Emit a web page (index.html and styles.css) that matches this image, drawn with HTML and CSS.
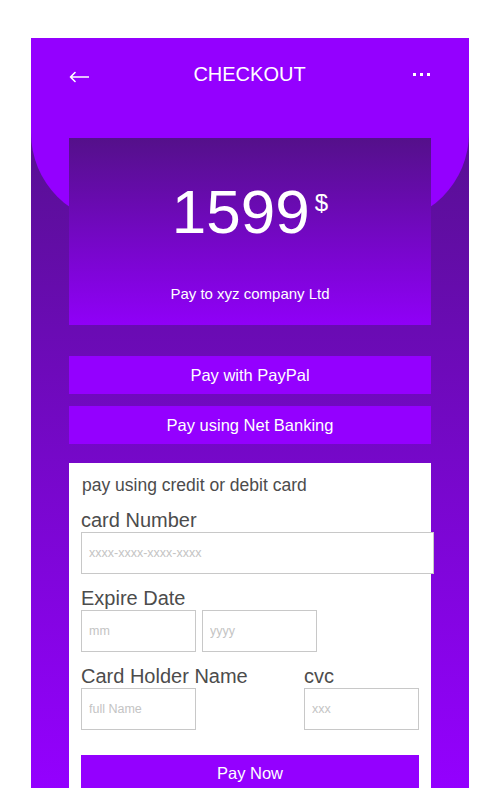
FILE: index.html
```html
<!DOCTYPE html>
<html lang="en">
<head>
<meta charset="utf-8">
<title>Checkout</title>
<link rel="stylesheet" href="styles.css">
</head>
<body>
<div class="phone">
  <header class="top">
    <nav class="nav">
      <svg class="back" width="20" height="12" viewBox="0 0 20 12" aria-label="back">
        <path d="M1.5 6 H19.5 M6 1.5 L1.5 6 L6 10.5" fill="none" stroke="#fff" stroke-width="1.6" stroke-linecap="round" stroke-linejoin="round"/>
      </svg>
      <h1 class="title">CHECKOUT</h1>
      <span class="more"><i></i><i></i><i></i></span>
    </nav>
  </header>

  <section class="amount">
    <div class="price">1599<span class="cur">$</span></div>
    <p class="payee">Pay to xyz company Ltd</p>
  </section>

  <div class="methods">
    <button class="method" type="button">Pay with PayPal</button>
    <button class="method" type="button">Pay using Net Banking</button>
  </div>

  <form class="cardform">
    <p class="lead">pay using credit or debit card</p>
    <div class="group first">
      <label class="lbl" for="num">card Number</label>
      <input class="field wide" id="num" type="text" placeholder="xxxx-xxxx-xxxx-xxxx">
    </div>
    <div class="group">
      <label class="lbl" for="mm">Expire Date</label>
      <div class="pair">
        <input class="field small" id="mm" type="text" placeholder="mm">
        <input class="field small" type="text" placeholder="yyyy">
      </div>
    </div>
    <div class="group split">
      <div class="col name">
        <label class="lbl" for="holder">Card Holder Name</label>
        <input class="field small" id="holder" type="text" placeholder="full Name">
      </div>
      <div class="col">
        <label class="lbl" for="cvc">cvc</label>
        <input class="field small" id="cvc" type="text" placeholder="xxx">
      </div>
    </div>
    <button class="paynow" type="button">Pay Now</button>
  </form>
</div>
</body>
</html>
```

FILE: styles.css
```css
* { box-sizing: border-box; }

body {
  margin: 0;
  background: #fff;
  font-family: "Liberation Sans", Arial, sans-serif;
}

.phone {
  margin: 38px 0 0 31px;
  width: 438px;
  height: 750px;
  background: linear-gradient(to bottom, #4f1283 0%, #9400ff 100%);
}

.top {
  height: 185px;
  background: #9400ff;
  border-radius: 0 0 90px 90px;
}

.nav {
  height: 72px;
  padding: 0 39px 0 38px;
  display: grid;
  grid-template-columns: 1fr auto 1fr;
  align-items: center;
}

.back { display: block; margin-top: 5px; }

.title {
  margin: 0;
  font-size: 20px;
  line-height: 23px;
  font-weight: normal;
  color: #fff;
  text-align: center;
}

.more {
  justify-self: end;
  display: flex;
  gap: 4px;
  margin-top: 1px;
}
.more i {
  display: block;
  width: 3px;
  height: 3px;
  background: #fff;
}

.amount {
  margin: -85px 38px 0;
  height: 187px;
  padding-top: 42px;
  background: linear-gradient(to bottom, #54108a 0%, #9000f8 100%);
  color: #fff;
  text-align: center;
}

.price {
  font-size: 62px;
  line-height: 64px;
}
.cur {
  display: inline-block;
  vertical-align: top;
  margin: 11px 0 0 5px;
  font-size: 24px;
  line-height: 24px;
}

.payee {
  margin: 41px 0 0;
  font-size: 15px;
  line-height: 18px;
}

.methods {
  margin: 31px 38px 0;
  display: flex;
  flex-direction: column;
  gap: 12px;
}

.method, .paynow {
  display: block;
  width: 100%;
  height: 38px;
  border: 0;
  padding: 0;
  background: #9400ff;
  color: #fff;
  font-family: "Liberation Sans", Arial, sans-serif;
  font-size: 16.5px;
}

.cardform {
  margin: 19px 38px 0;
  padding: 12px;
  background: #fff;
  color: #4c4c4c;
}

.lead {
  margin: 0 0 0 1px;
  font-size: 17.5px;
  line-height: 20px;
}

.group { margin-top: 13px; }
.group.first { margin-top: 13.5px; }

.lbl {
  display: block;
  font-size: 20px;
  line-height: 23px;
}

.field {
  display: block;
  height: 42px;
  padding: 0 7px;
  border: 1px solid #c8c8c8;
  background: #fff;
  font-family: "Liberation Sans", Arial, sans-serif;
  font-size: 12.5px;
  color: #333;
  outline: none;
}
.field::placeholder { color: #c4c4c4; }

.wide { width: 353px; }
.small { width: 115px; }

.pair {
  display: flex;
  gap: 6px;
}

.split { display: flex; }
.name { width: 223px; }

.paynow {
  margin-top: 25px;
  width: 338px;
}
```
